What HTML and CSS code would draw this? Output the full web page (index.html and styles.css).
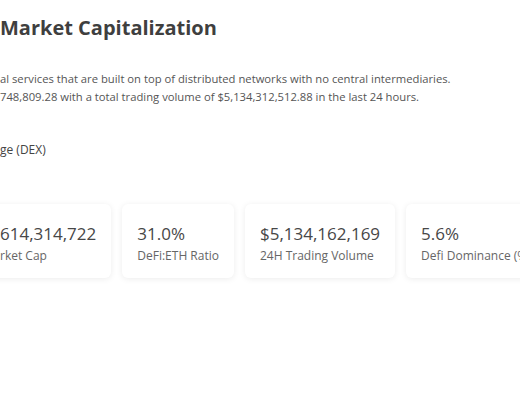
FILE: index.html
```html
<!DOCTYPE html>
<html>
<head>
  <link rel="stylesheet" href="styles.css">
</head>
<body>
  <div class="page">
    <h1 class="title">Market Capitalization</h1>

    <div class="intro">
      <p>al services that are built on top of distributed networks with no central intermediaries.</p>
      <p>748,809.28 with a total trading volume of $5,134,312,512.88 in the last 24 hours.</p>
    </div>

    <div class="exchange">ge (DEX)</div>

    <div class="stats">
      <div class="stat-card first">
        <span class="stat-value">614,314,722</span>
        <span class="stat-label">rket Cap</span>
      </div>
      <div class="stat-card">
        <span class="stat-value">31.0%</span>
        <span class="stat-label">DeFi:ETH Ratio</span>
      </div>
      <div class="stat-card">
        <span class="stat-value">$5,134,162,169</span>
        <span class="stat-label">24H Trading Volume</span>
      </div>
      <div class="stat-card">
        <span class="stat-value">5.6%</span>
        <span class="stat-label">Defi Dominance (%)</span>
      </div>
    </div>
  </div>
</body>
</html>
```

FILE: styles.css
```css
* {
  box-sizing: border-box;
}

html,
body {
  margin: 0;
  background: #fff;
  overflow: hidden;
}

body {
  font-family: "Open Sans", "Noto Sans", sans-serif;
  color: #555;
}

.page {
  padding-top: 14px;
}

.title {
  margin: 0;
  font-size: 20px;
  font-weight: 700;
  line-height: 28px;
  color: #3f3f3f;
}

.intro {
  margin-top: 28px;
  font-size: 11.25px;
  line-height: 18px;
  color: #555;
}

.intro p {
  margin: 0;
  white-space: nowrap;
}

.exchange {
  margin-top: 35px;
  font-size: 12px;
  line-height: 18px;
  color: #444;
}

.stats {
  display: flex;
  gap: 11px;
  margin-top: 45px;
  margin-left: -20px;
  padding-bottom: 20px;
}

.stat-card {
  display: flex;
  flex-direction: column;
  flex-shrink: 0;
  padding: 18px 15px 14px;
  background: #fff;
  border-radius: 6px;
  box-shadow: 0 1px 6px rgba(0, 0, 0, 0.08);
  white-space: nowrap;
}

.stat-card.first {
  padding-left: 20px;
}

.stat-value {
  font-size: 17px;
  line-height: 24px;
  color: #474747;
}

.stat-label {
  margin-top: 2px;
  font-size: 12px;
  line-height: 16px;
  color: #666;
}
```
